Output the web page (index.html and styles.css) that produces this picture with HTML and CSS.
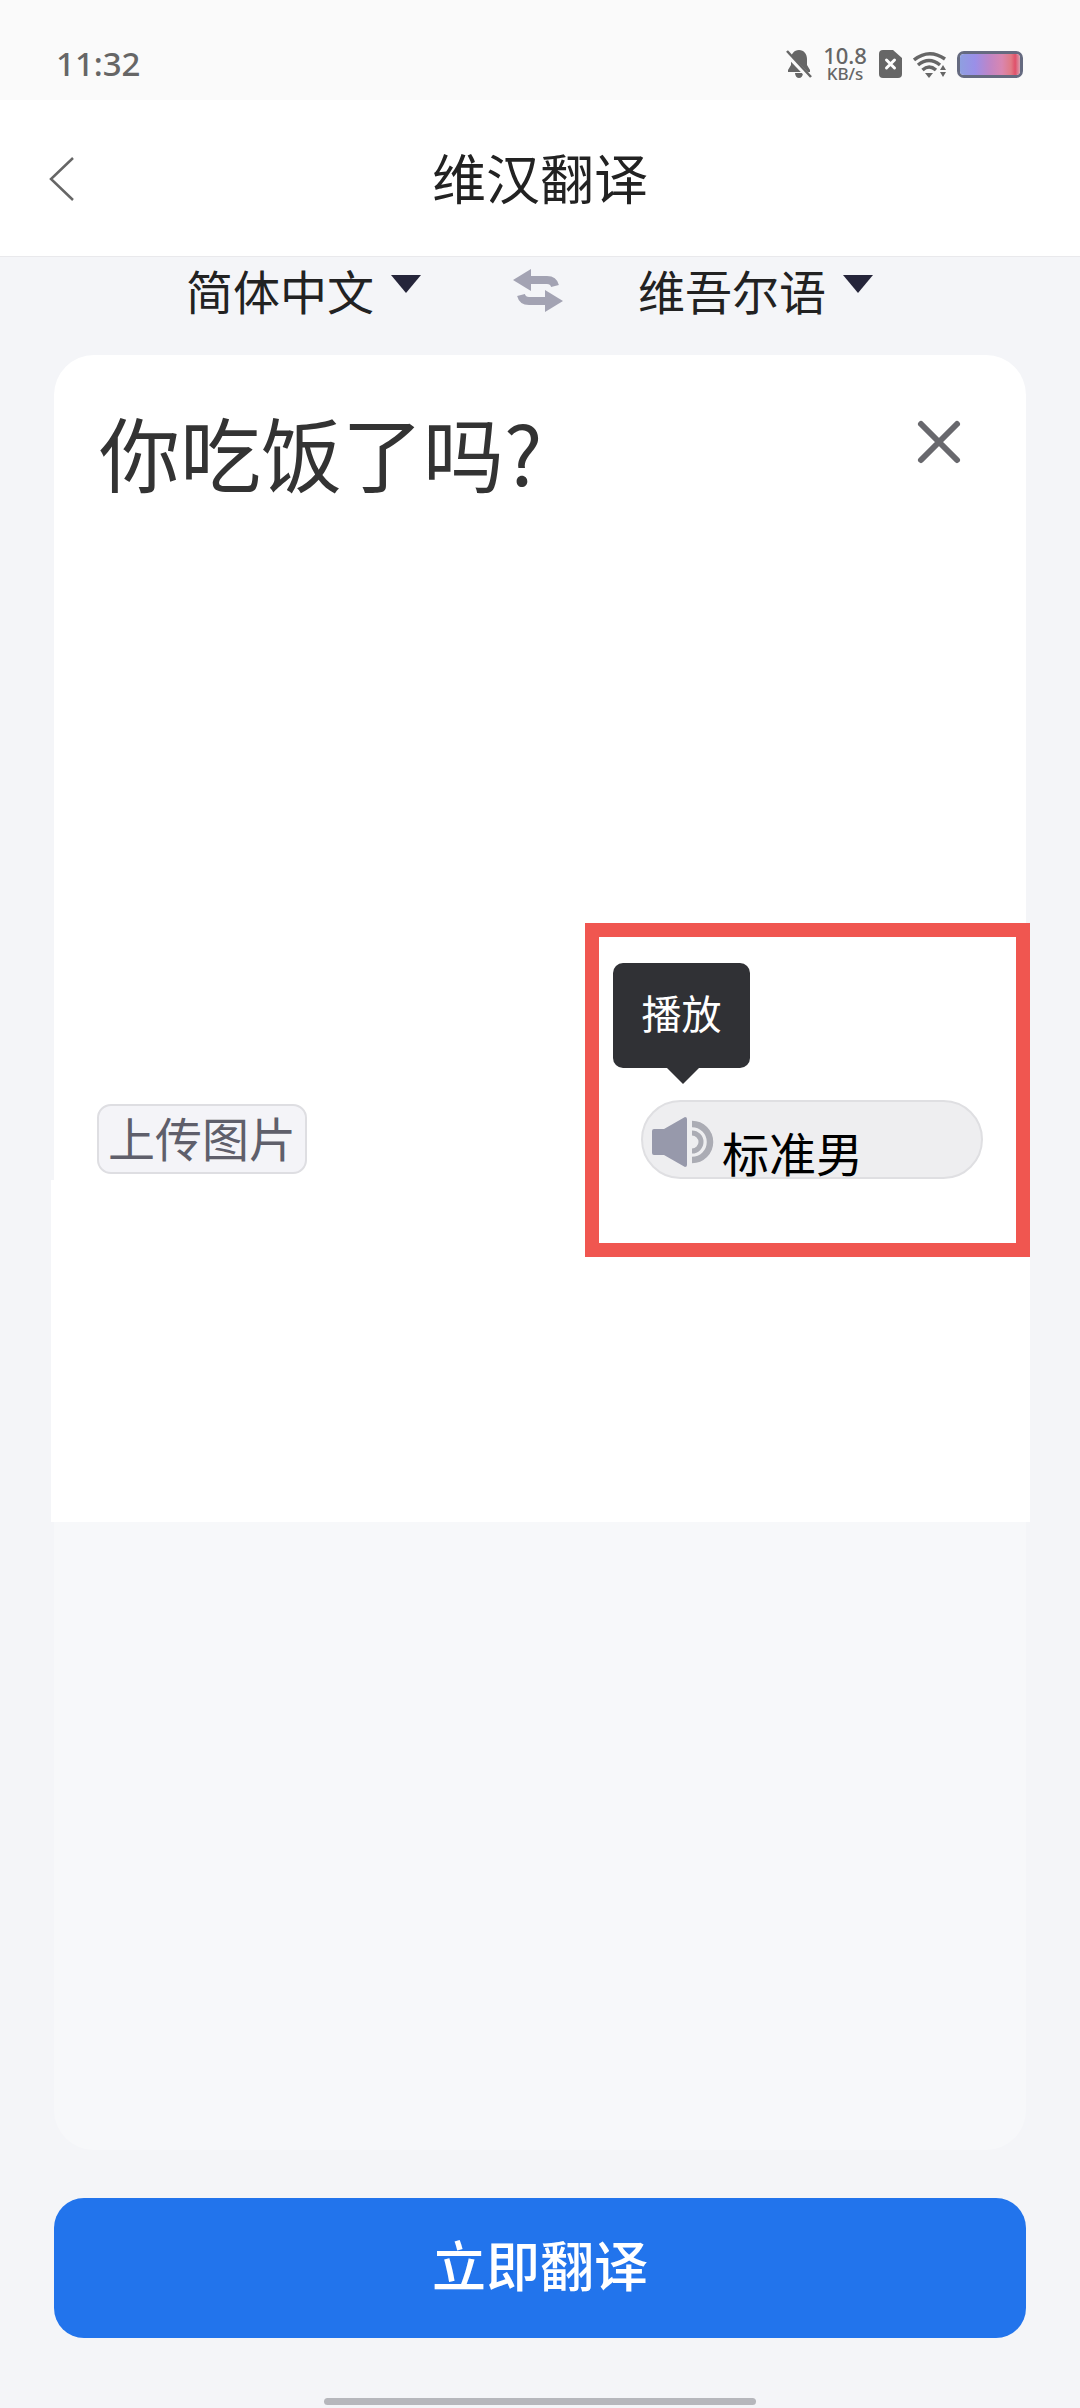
FILE: index.html
```html
<!DOCTYPE html>
<html lang="zh">
<head>
<meta charset="utf-8">
<title>维汉翻译</title>
<link rel="stylesheet" href="styles.css">
</head>
<body>
<div class="screen">
  <header class="status">
    <span class="time">11:32</span>
    <div class="status-icons">
      <svg class="ic-bell" width="26" height="28" viewBox="0 0 26 28"><path d="M13 0c5 0 8 4 8 9v6l3 5v2H2v-2l3-5V9c0-5 3-9 8-9z" fill="#666"/><path d="M9 23h8c0 3-2 5-4 5s-4-2-4-5z" fill="#666"/><path d="M0 3l24 25" stroke="#fafafa" stroke-width="5"/><path d="M1 1l24 26" stroke="#666" stroke-width="2.500"/></svg>
      <div class="speed"><span class="speed-num">10.8</span><span class="speed-unit">KB/s</span></div>
      <svg class="ic-sim" width="23" height="28" viewBox="0 0 23 28"><path d="M4 0h10l9 8v16a4 4 0 0 1-4 4H4a4 4 0 0 1-4-4V4a4 4 0 0 1 4-4z" fill="#666"/><path d="M7.500 10l8 8M15.500 10l-8 8" stroke="#fff" stroke-width="3" stroke-linecap="round"/></svg>
      <svg class="ic-wifi" width="34" height="27" viewBox="0 0 34 27"><g fill="none" stroke="#666" stroke-width="3.500"><path d="M1 9Q16-3 32 8"/><path d="M5 14Q16 5 27 14"/><path d="M9.500 19Q16 13 23 19"/></g><path d="M12 22h8l-4 5z" fill="#666"/><path d="M30 14l3 5h-6zM27 21h6l-3 5z" fill="#666"/></svg>
      <div class="battery"><div class="battery-fill"></div></div>
    </div>
  </header>

  <nav class="nav">
    <svg class="back" width="26" height="46" viewBox="0 0 26 46"><path d="M24 2L2 23l22 21" fill="none" stroke="#666" stroke-width="2.500"/></svg>
    <h1 class="nav-title">维汉翻译</h1>
  </nav>

  <div class="langs">
    <div class="lang lang-source"><span>简体中文</span><i class="caret"></i></div>
    <svg class="swap" width="50" height="44" viewBox="0 0 50 44"><path d="M0 11L18 0v22z" fill="#a3a3b3"/><path d="M16 11h18c4 0 7 2 8 6" fill="none" stroke="#a3a3b3" stroke-width="8"/><path d="M50 32L32 21v22z" fill="#a3a3b3"/><path d="M34 32H16c-4 0-7-2-8-6" fill="none" stroke="#a3a3b3" stroke-width="8"/></svg>
    <div class="lang lang-target"><span>维吾尔语</span><i class="caret"></i></div>
  </div>

  <main class="card">
    <section class="editor">
      <div class="input-row">
        <p class="input-text">你吃饭了吗?</p>
        <svg class="clear" width="46" height="46" viewBox="0 0 46 46"><path d="M5 5l36 36M41 5L5 41" stroke="#68686d" stroke-width="6" stroke-linecap="round"/></svg>
      </div>
      <div class="tools">
        <button class="upload">上传图片</button>
        <div class="voice">
          <svg class="speaker" width="62" height="50" viewBox="0 0 62 50"><path d="M2 12h10L33 0q2 0 2 2v46q0 2-2 2L12 38H2q-2 0-2-2V14q0-2 2-2z" fill="#9799ab"/><path d="M40 7a18 18 0 0 1 0 36" fill="none" stroke="#abacb4" stroke-width="6.500"/><path d="M40 16a9 9 0 0 1 0 18" fill="none" stroke="#abacb4" stroke-width="5"/></svg>
          <span class="voice-label">标准男</span>
        </div>
      </div>
    </section>
    <section class="result-white"></section>
    <section class="result-panel"></section>
  </main>

  <button class="submit">立即翻译</button>
  <div class="home-bar"></div>

  <div class="tooltip">播放</div>
  <div class="highlight"></div>
</div>
</body>
</html>
```
FILE: styles.css
```css
* { box-sizing: border-box; }
html, body { margin: 0; padding: 0; }
body { font-family: "Noto Sans CJK SC", "Noto Sans", sans-serif; background: #f4f5f8; }
.screen { position: relative; width: 1080px; height: 2408px; overflow: hidden; display: flex; flex-direction: column; background: #f4f5f8; }

.status { height: 100px; background: #fafafa; display: flex; align-items: center; justify-content: space-between; padding: 0 57px 0 56px; flex: none; }
.time { font-family: "Noto Sans", sans-serif; font-size: 33px; font-weight: 500; color: #666; line-height: 1; margin-top: 26px; }
.status-icons { display: flex; align-items: center; gap: 10px; margin-top: 28px; }
.speed { display: flex; flex-direction: column; align-items: center; color: #666; width: 46px; margin-right: 1px; font-family: "Noto Sans", sans-serif; }
.speed-num { font-size: 22px; line-height: 20px; font-weight: 500; }
.speed-unit { font-size: 17px; line-height: 18px; font-weight: 500; }
.ic-wifi { margin-left: 1px; }
.battery { width: 66px; height: 27px; border: 3px solid #656a80; border-radius: 7px; overflow: hidden; }
.battery-fill { width: 100%; height: 100%; background: linear-gradient(90deg, #8f9fe0 0%, #9a8fe8 25%, #c085c5 50%, #d986b0 70%, #e07a85 85%, #e0506a 92%, #d8a0b0 100%); }

.nav { position: relative; height: 157px; background: #fff; border-bottom: 1px solid #e9e9ec; display: flex; align-items: center; justify-content: center; flex: none; }
.back { position: absolute; left: 49px; top: 56px; }
.nav-title { margin: -3px 0 0; font-size: 54px; font-weight: 400; color: #222; line-height: 1; }

.langs { height: 98px; display: flex; align-items: flex-start; padding: 2px 0 0 186px; flex: none; }
.lang { display: flex; align-items: flex-start; color: #222; font-size: 47px; line-height: 62px; }
.caret { width: 0; height: 0; margin-left: 17px; margin-top: 16px; border-left: 15px solid transparent; border-right: 15px solid transparent; border-top: 18px solid #25253a; }
.swap { margin: 10px 0 0 92px; flex: none; }
.lang-target { margin-left: 75px; }

.card { width: 972px; margin: 0 54px; height: 1795px; flex: none; display: flex; flex-direction: column; }
.editor { height: 825px; background: #fff; border-radius: 40px 40px 0 0; padding: 0 47px 0 45px; display: flex; flex-direction: column; }
.input-row { display: flex; justify-content: space-between; height: 749px; }
.input-text { margin: 0; font-size: 81px; line-height: 104px; color: #333; padding-top: 44px; }
.clear { margin: 64px 17px 0 0; }
.tools { display: flex; justify-content: space-between; align-items: flex-start; margin: 0 -4px 0 -2px; }
.upload { width: 210px; height: 70px; padding: 0 0 4px; background: #f4f4f8; border: 2px solid #dedee2; border-radius: 14px; font: inherit; font-size: 47px; line-height: 60px; color: #5f5f6b; white-space: nowrap; }
.voice { width: 342px; height: 79px; margin-top: -4px; background: #eeeef0; border: 2px solid #dfdfe2; border-radius: 40px; display: flex; align-items: flex-start; padding: 15px 0 0 9px; overflow: hidden; }
.speaker { flex: none; }
.voice-label { font-size: 47px; line-height: 62px; color: #000; margin-left: 8px; margin-top: 4px; }
.result-white { height: 342px; margin: 0 -4px 0 -3px; background: #fff; }
.result-panel { height: 628px; background: #f7f8fa; border-radius: 0 0 40px 40px; }

.submit { width: 972px; height: 140px; margin: 48px 54px 0; padding: 0 0 9px; flex: none; background: #2274ec; color: #fff; border: 0; border-radius: 30px; font: inherit; font-size: 54px; font-weight: 500; }
.home-bar { width: 432px; height: 7px; margin: 60px auto 0; flex: none; background: #b6b7bc; border-radius: 4px; }

.tooltip { position: absolute; left: 613px; top: 963px; width: 137px; height: 105px; background: #303135; color: #fff; border-radius: 10px; font-size: 40px; line-height: 99px; text-align: center; }
.tooltip::after { content: ""; position: absolute; left: 54px; top: 105px; width: 0; height: 0; border-left: 16px solid transparent; border-right: 16px solid transparent; border-top: 16px solid #303135; }
.highlight { position: absolute; left: 585px; top: 923px; width: 445px; height: 334px; border: 14px solid #f05650; }
```
